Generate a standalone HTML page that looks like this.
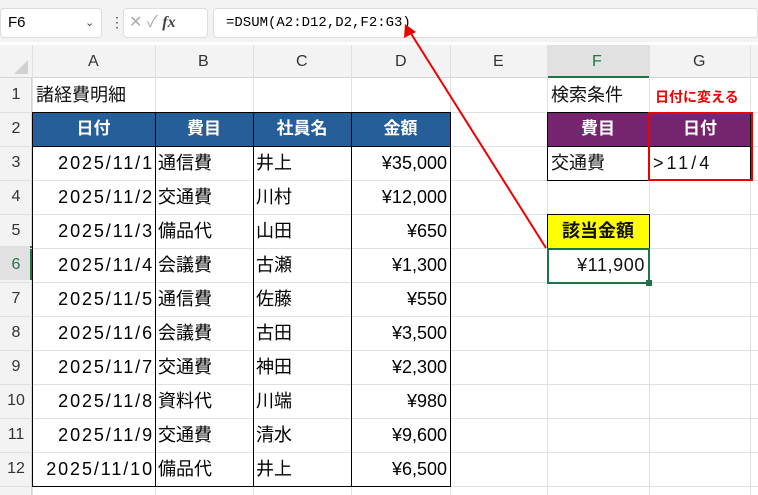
<!DOCTYPE html>
<html><head><meta charset="utf-8"><style>
*{margin:0;padding:0;box-sizing:border-box}
body{width:758px;height:495px;overflow:hidden;background:#fff;font-family:"Liberation Sans","Noto Sans CJK JP",sans-serif;position:relative}
.a{position:absolute}
.c{position:absolute;font-size:18px;line-height:34px;white-space:nowrap;color:#111;padding:0 4px}
.r{text-align:right}.m{text-align:center}
.h{color:#fff;font-weight:bold;font-size:17px;text-align:center}
</style></head><body>
<!-- top bar -->
<div class="a" style="left:0;top:0;width:758px;height:42px;background:#f3f3f3"></div>
<div class="a" style="left:0;top:8px;width:102px;height:30px;background:#fff;border:1px solid #ddd;border-radius:4px;font-size:15px;line-height:28px;padding-left:7px">F6<span style="position:absolute;left:84px;top:0;font-size:11px;color:#444">&#8964;</span></div>
<div class="a" style="left:110px;top:14px;font-size:14px;color:#444">⋮</div>
<div class="a" style="left:123px;top:8px;width:85px;height:30px;background:#fff;border:1px solid #ddd;border-radius:4px;font-size:16px;line-height:28px;color:#aaa;padding-left:5px">✕ ✓ <i style="font-family:'Liberation Serif',serif;color:#444;font-weight:bold">fx</i></div>
<div class="a" style="left:213px;top:8px;width:545px;height:30px;background:#fff;border:1px solid #ddd;border-radius:4px;font-family:'Liberation Mono',monospace;font-size:14px;line-height:28px;padding-left:12px">=DSUM(A2:D12,D2,F2:G3)</div>
<!-- headers -->
<div class="a" style="left:0;top:45px;width:758px;height:33px;background:#f3f3f3;border-bottom:1px solid #d4d4d4"></div>
<div class="a" style="left:0;top:78px;width:32px;height:417px;background:#f3f3f3;border-right:1px solid #d4d4d4"></div>
<div class="a" style="left:547px;top:45px;width:102px;height:33px;background:#e1e1e1;border-bottom:2px solid #217346"></div>
<div class="a" style="left:0;top:246px;width:32px;height:34px;background:#e1e1e1;border-right:2px solid #217346"></div>
<svg class="a" style="left:0;top:0" width="758" height="495">
<g stroke="#e0e0e0" stroke-width="1">
<line x1="32.5" y1="45" x2="32.5" y2="495"/><line x1="155.5" y1="45" x2="155.5" y2="495"/><line x1="253.5" y1="45" x2="253.5" y2="495"/><line x1="351.5" y1="45" x2="351.5" y2="495"/><line x1="450.5" y1="45" x2="450.5" y2="495"/><line x1="547.5" y1="45" x2="547.5" y2="495"/><line x1="649.5" y1="45" x2="649.5" y2="495"/><line x1="750.5" y1="45" x2="750.5" y2="495"/>
<line x1="0" y1="112.5" x2="758" y2="112.5"/><line x1="0" y1="146.5" x2="758" y2="146.5"/><line x1="0" y1="180.5" x2="758" y2="180.5"/><line x1="0" y1="214.5" x2="758" y2="214.5"/><line x1="0" y1="248.5" x2="758" y2="248.5"/><line x1="0" y1="282.5" x2="758" y2="282.5"/><line x1="0" y1="316.5" x2="758" y2="316.5"/><line x1="0" y1="350.5" x2="758" y2="350.5"/><line x1="0" y1="384.5" x2="758" y2="384.5"/><line x1="0" y1="418.5" x2="758" y2="418.5"/><line x1="0" y1="452.5" x2="758" y2="452.5"/><line x1="0" y1="486.5" x2="758" y2="486.5"/>
</g>
<polygon points="28,74 28,60 14,74" fill="#d0d0d0"/>
<rect x="32" y="112" width="418" height="34" fill="#255e99"/>
<rect x="547" y="112" width="203" height="34" fill="#76246f"/>
<rect x="547" y="214" width="102" height="34" fill="#ffff00"/>
<g stroke="#000" stroke-width="1" fill="none">
<rect x="32.5" y="112.5" width="418" height="374"/>
<line x1="155.5" y1="112" x2="155.5" y2="487"/><line x1="253.5" y1="112" x2="253.5" y2="487"/><line x1="351.5" y1="112" x2="351.5" y2="487"/>
<line x1="32" y1="146.5" x2="450" y2="146.5"/>
<rect x="547.5" y="112.5" width="203" height="68"/><line x1="649.5" y1="112" x2="649.5" y2="180"/><line x1="547" y1="146.5" x2="750" y2="146.5"/>
<rect x="547.5" y="214.5" width="102" height="34"/>
</g>
<rect x="649" y="113" width="103" height="67" fill="none" stroke="#e00" stroke-width="2"/>
<rect x="548" y="249" width="101" height="34" fill="none" stroke="#217346" stroke-width="2"/>
<rect x="646" y="280" width="6" height="6" fill="#217346"/>
<line x1="546" y1="248" x2="410" y2="32" stroke="#e00" stroke-width="2"/>
<polygon points="405,24 404,38 416,32" fill="#e00"/>
</svg>
<div class="a" style="top:45px;left:0;width:758px;height:33px;font-size:16px;line-height:33px;color:#333">
<span class="a" style="left:88px">A</span><span class="a" style="left:198px">B</span><span class="a" style="left:296px">C</span><span class="a" style="left:395px">D</span><span class="a" style="left:493px">E</span><span class="a" style="left:592px;color:#217346">F</span><span class="a" style="left:693px">G</span></div>
<div class="a" style="left:0;top:78px;width:32px;font-size:16px;line-height:34px;text-align:center;color:#333">1<br>2<br>3<br>4<br>5<br><span style="color:#217346">6</span><br>7<br>8<br>9<br>10<br>11<br>12</div>
<div class="c" style="left:32px;top:78px">諸経費明細</div>
<div class="c h" style="left:32px;top:112px;width:123px">日付</div>
<div class="c h" style="left:155px;top:112px;width:98px">費目</div>
<div class="c h" style="left:253px;top:112px;width:98px">社員名</div>
<div class="c h" style="left:351px;top:112px;width:99px">金額</div>
<div class="a" style="left:32px;top:146px;width:123px;font-size:18px;line-height:34px;text-align:right;padding-right:1px;letter-spacing:1.9px;white-space:nowrap">2025/11/1<br>2025/11/2<br>2025/11/3<br>2025/11/4<br>2025/11/5<br>2025/11/6<br>2025/11/7<br>2025/11/8<br>2025/11/9<br>2025/11/10</div>
<div class="a" style="left:155px;top:146px;font-size:18px;line-height:34px;padding-left:3px">通信費<br>交通費<br>備品代<br>会議費<br>通信費<br>会議費<br>交通費<br>資料代<br>交通費<br>備品代</div>
<div class="a" style="left:253px;top:146px;font-size:18px;line-height:34px;padding-left:3px">井上<br>川村<br>山田<br>古瀬<br>佐藤<br>古田<br>神田<br>川端<br>清水<br>井上</div>
<div class="a" style="left:351px;top:146px;width:99px;font-size:18px;line-height:34px;text-align:right;padding-right:3px">¥35,000<br>¥12,000<br>¥650<br>¥1,300<br>¥550<br>¥3,500<br>¥2,300<br>¥980<br>¥9,600<br>¥6,500</div>
<div class="c" style="left:547px;top:78px">検索条件</div>
<div class="c" style="left:651px;top:78px;font-size:14px;font-weight:bold;color:#e00;line-height:38px">日付に変える</div>
<div class="c h" style="left:547px;top:112px;width:102px">費目</div>
<div class="c h" style="left:649px;top:112px;width:102px">日付</div>
<div class="c" style="left:547px;top:146px">交通費</div>
<div class="c" style="left:649px;top:146px;letter-spacing:3px">&gt;11/4</div>
<div class="c" style="left:547px;top:214px;width:102px;text-align:center;font-weight:bold">該当金額</div>
<div class="c r" style="left:547px;top:248px;width:102px;letter-spacing:0.6px">¥11,900</div>
</body></html>
